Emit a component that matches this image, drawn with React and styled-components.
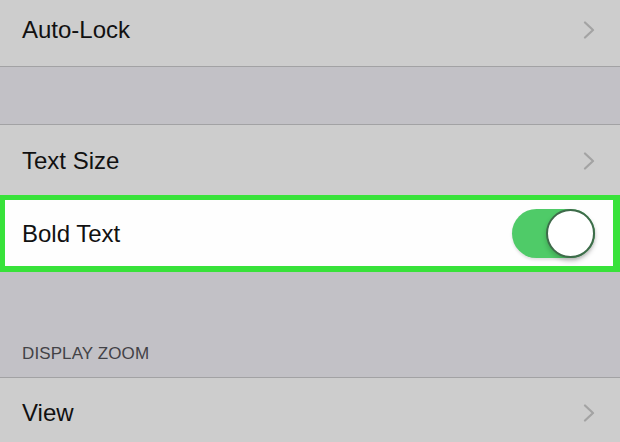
import React from "react";
import styled, { createGlobalStyle } from "styled-components";

const GlobalStyle = createGlobalStyle`
  body {
    margin: 0;
    background: #c2c1c6;
    font-family: "Liberation Sans", Arial, sans-serif;
  }
`;

const Page = styled.div`
  width: 620px;
  height: 442px;
  overflow: hidden;
  display: flex;
  flex-direction: column;
  background: #c2c1c6;
`;

const Row = styled.div`
  box-sizing: border-box;
  flex: none;
  height: ${(p) => p.h}px;
  display: flex;
  align-items: center;
  justify-content: space-between;
  padding: ${(p) => (p.offset > 0 ? p.offset : 0)}px 25px
    ${(p) => (p.offset < 0 ? -p.offset : 0)}px 22px;
  background: #cdcdcd;
  border-top: ${(p) => (p.top ? "1px solid #a2a2a4" : "none")};
  border-bottom: ${(p) => (p.bottom ? "1px solid #a2a2a4" : "none")};
`;

const HighlightRow = styled.div`
  box-sizing: border-box;
  flex: none;
  height: 77px;
  display: flex;
  align-items: center;
  justify-content: space-between;
  padding: 0 18px 0 17px;
  background: #fefefe;
  border-style: solid;
  border-color: #38e23a;
  border-width: 5px 7px 6px 5px;
`;

const Label = styled.span`
  font-size: 24px;
  color: #111;
  padding-top: ${(p) => p.shift || 0}px;
`;

const Spacer = styled.div`
  flex: none;
  height: ${(p) => p.h}px;
`;

const SectionHeader = styled.div`
  box-sizing: border-box;
  flex: none;
  height: ${(p) => p.h}px;
  display: flex;
  align-items: flex-end;
  padding: 0 22px 13px;
  font-size: 17px;
  color: #424246;
  letter-spacing: 0.1px;
`;

const Toggle = styled.div`
  width: 83px;
  height: 49px;
  border-radius: 25px;
  background: #4fcb68;
  display: flex;
  justify-content: flex-end;
  box-shadow: 0 2px 3px rgba(0, 0, 0, 0.12);
`;

const Knob = styled.div`
  box-sizing: border-box;
  width: 49px;
  height: 49px;
  border-radius: 50%;
  background: #fff;
  border: 2px solid #3e6b4a;
  box-shadow: 0 3px 5px rgba(0, 0, 0, 0.2);
`;

const Chevron = () => (
  <svg width="12" height="18" viewBox="0 0 12 18">
    <polyline
      points="2,1.5 10,9 2,16.5"
      fill="none"
      stroke="#a3a3a3"
      strokeWidth="2.2"
      strokeLinecap="round"
      strokeLinejoin="round"
    />
  </svg>
);

export default function App() {
  return (
    <>
      <GlobalStyle />
      <Page>
        <Row h={67} bottom offset={-6}>
          <Label>Auto-Lock</Label>
          <Chevron />
        </Row>
        <Spacer h={57} />
        <Row h={71} top offset={2}>
          <Label>Text Size</Label>
          <Chevron />
        </Row>
        <HighlightRow>
          <Label shift={2}>Bold Text</Label>
          <Toggle>
            <Knob />
          </Toggle>
        </HighlightRow>
        <SectionHeader h={105}>DISPLAY ZOOM</SectionHeader>
        <Row h={66} top offset={4}>
          <Label>View</Label>
          <Chevron />
        </Row>
      </Page>
    </>
  );
}
